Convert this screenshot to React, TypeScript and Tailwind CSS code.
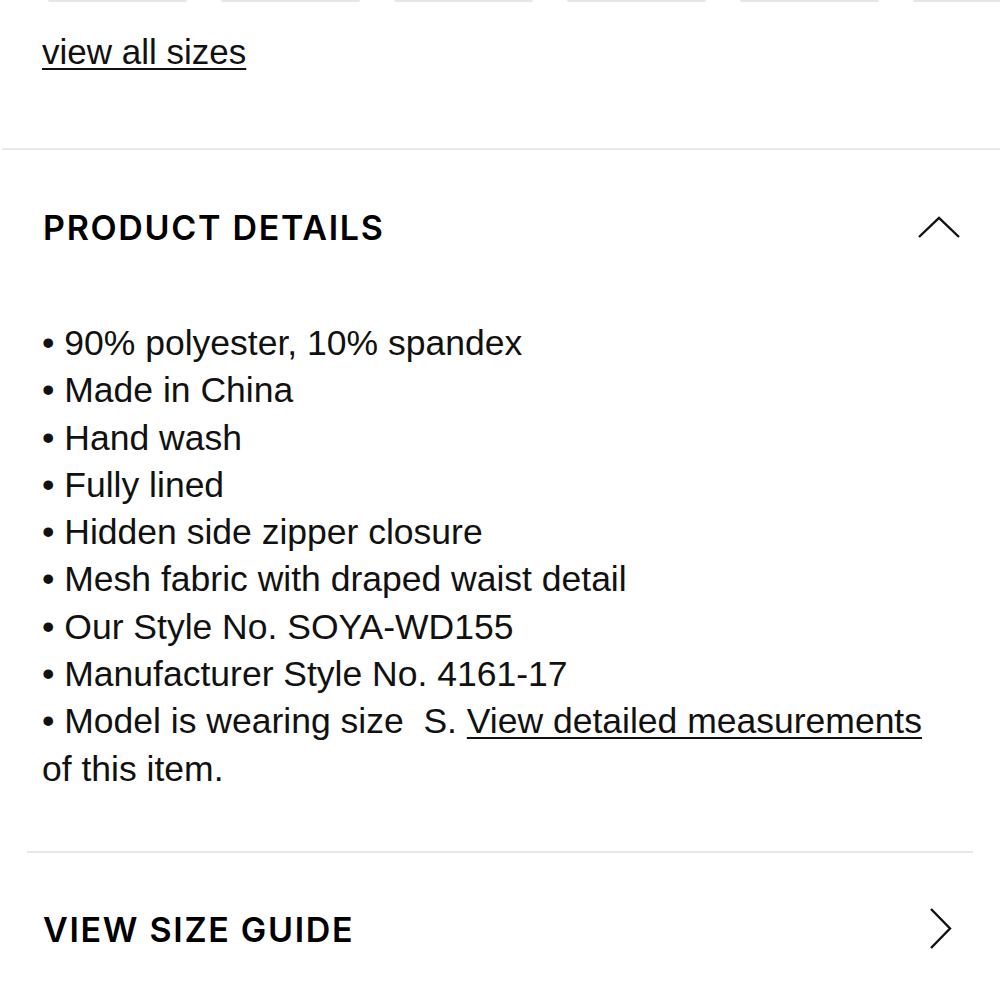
import React from 'react';

const details = [
  '90% polyester, 10% spandex',
  'Made in China',
  'Hand wash',
  'Fully lined',
  'Hidden side zipper closure',
  'Mesh fabric with draped waist detail',
  'Our Style No. SOYA-WD155',
  'Manufacturer Style No. 4161-17',
];

const ChevronUp = () => (
  <svg width="44" height="24" viewBox="0 0 44 24" fill="none" stroke="#111" strokeWidth="2.4">
    <path d="M2 21 L22 2 L42 21" />
  </svg>
);

const ChevronRight = () => (
  <svg width="24" height="44" viewBox="0 0 24 44" fill="none" stroke="#111" strokeWidth="2.4">
    <path d="M2 2 L21 21.5 L2 41" />
  </svg>
);

export default function App() {
  const sizeTabs = [0, 1, 2, 3, 4, 5];

  return (
    <div className="w-[1000px] h-[1000px] overflow-hidden bg-white text-[#111] font-['Liberation_Sans',Arial,sans-serif]">
      {/* size tabs cut off at the top */}
      <div className="flex gap-[34px] pl-[48px]">
        {sizeTabs.map((i) => (
          <div key={i} className="w-[139px] h-[2px] shrink-0 bg-[#e6e6e6] rounded-b-[3px]" />
        ))}
      </div>

      <div className="pl-[42px] pt-[26px]">
        <a href="#" className="text-[35px] leading-[47px] underline decoration-2 underline-offset-[4px]">
          view all sizes
        </a>
      </div>

      <div className="mt-[73px] h-[2px] bg-[#e8e8e8] ml-[2px]" />

      <div className="mt-[61px] flex items-center justify-between pl-[43px] pr-[39px]">
        <h2 className="font-['Inter',sans-serif] font-semibold text-[34px] leading-[34px] tracking-[0.05em] text-black">
          PRODUCT DETAILS
        </h2>
        <ChevronUp />
      </div>

      <div className="mt-[75px] pl-[42px] pr-[52px] text-[35.5px] leading-[47.3px]">
        {details.map((d) => (
          <div key={d}>• {d}</div>
        ))}
        <p>
          • Model is wearing size{'\u00a0'} S.{' '}
          <a href="#" className="underline decoration-2 underline-offset-[4px]">
            View detailed measurements
          </a>{' '}
          of this item.
        </p>
      </div>

      <div className="mt-[58px] h-[2px] bg-[#e8e8e8] mx-[27px]" />

      <div className="mt-[56px] flex items-center justify-between pl-[43px] pr-[47px]">
        <h2 className="font-['Inter',sans-serif] font-semibold text-[34px] leading-[34px] tracking-[0.05em] text-black">
          VIEW SIZE GUIDE
        </h2>
        <div className="-mt-[2px]">
          <ChevronRight />
        </div>
      </div>
    </div>
  );
}
